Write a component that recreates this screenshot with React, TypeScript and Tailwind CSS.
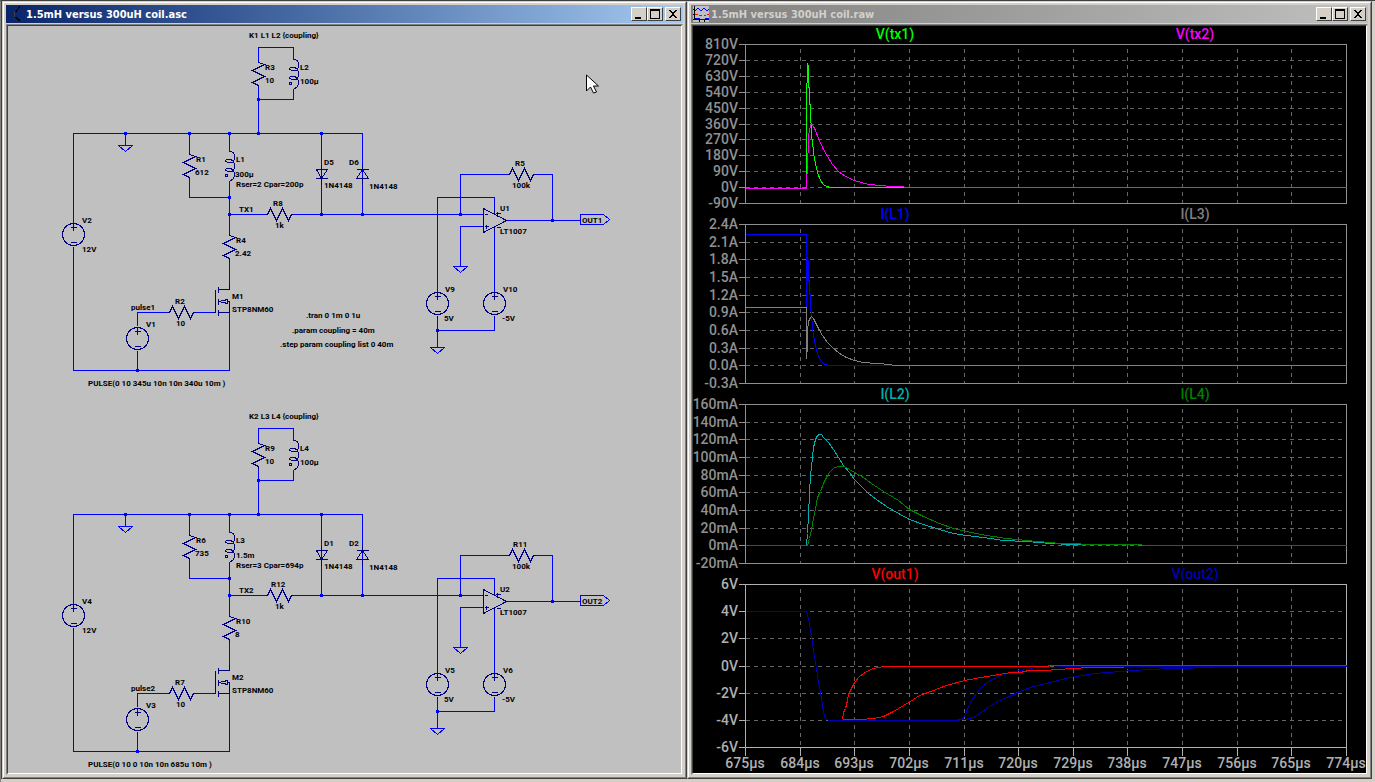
import type { ReactNode } from 'react';
import clsx from 'clsx';

type Point = [number, number];

const toPoints = (pts: Point[]) => pts.map((p) => p.join(',')).join(' ');

/* ---------- window chrome ---------- */

function CaptionButton({ label, children }: { label: string; children: ReactNode }) {
  return (
    <button
      aria-label={label}
      className="h-[14px] w-4 border border-t-white border-l-white border-r-[#404040] border-b-[#404040] bg-[#d4d0c8]"
    >
      <svg viewBox="0 0 14 12" className="block h-3 w-[14px]" shapeRendering="crispEdges">
        {children}
      </svg>
    </button>
  );
}

interface MdiWindowProps {
  title: string;
  active?: boolean;
  icon: ReactNode;
  children: ReactNode;
}

function MdiWindow({ title, active, icon, children }: MdiWindowProps) {
  return (
    <section className="border-t border-l border-r border-b border-t-[#d4d0c8] border-l-[#d4d0c8] border-r-[#404040] border-b-[#404040]">
      <div className="border border-t-white border-l-white border-r-[#808080] border-b-[#808080] bg-[#d4d0c8] p-[2px]">
        <header
          className={clsx(
            'mb-px flex h-[18px] items-center bg-linear-to-r px-[2px]',
            active ? 'from-[#0a246a] to-[#a6caf0] text-white' : 'from-[#808080] to-[#c0c0c0] text-[#d4d0c8]'
          )}
        >
          {icon}
          <h1 className="ml-[2px] flex-1 truncate pt-px font-['DejaVu_Sans_Condensed','DejaVu_Sans',sans-serif] text-[11px] leading-[18px] font-bold">
            {title}
          </h1>
          <div className="flex">
            <CaptionButton label="Minimize">
              <path d="M3 9h6v2H3z" />
            </CaptionButton>
            <CaptionButton label="Maximize">
              <path d="M2 1h10v10H2zM3 3v7h8V3z" fillRule="evenodd" />
            </CaptionButton>
            <span className="w-[2px]" />
            <CaptionButton label="Close">
              <path d="M3 2h2v1h1v1h2V3h1V2h2v1h-1v1H9v1H8v2h1v1h1v1h1v1H9V9H8V8H6v1H5v1H3V9h1V8h1V7h1V5H5V4H4V3H3z" />
            </CaptionButton>
          </div>
        </header>
        <div className="border border-t-[#808080] border-l-[#808080] border-r-[#d4d0c8] border-b-[#d4d0c8]">
          <div className="border border-t-[#404040] border-l-[#404040] border-r-white border-b-white">{children}</div>
        </div>
      </div>
    </section>
  );
}

const SchematicIcon = () => (
  <svg viewBox="0 0 16 16" className="h-4 w-4" fill="none" stroke="#000" shapeRendering="crispEdges">
    <path d="M6.5 5v6" stroke="#404040" />
    <path d="M11.5 0v1l-4 5M7.5 11l4 4M9 13h2v2" />
  </svg>
);

const WaveformIcon = () => (
  <svg viewBox="0 0 16 16" className="h-4 w-4" fill="none" shapeRendering="crispEdges">
    <rect width="16" height="16" fill="#c0c0c0" />
    <path d="M1.5 0v13M0 3.5h2M0 8.5h2M0 13.5h16M6.5 14v2M11.5 14v2" stroke="#000" />
    <path d="M2 5l3-3l3 3l3-3l3 3l2-2M2 12.5h4l2 1h3l2-1h3" stroke="#00f" />
    <path d="M2 8.5h3m1 1h3m2 0h2m1-1h2" stroke="#f00" />
  </svg>
);

/* ---------- schematic ---------- */

const NAVY = '#000080';

function Label({ x, y, children }: { x: number; y: number; children: ReactNode }) {
  return (
    <text x={x} y={y}>
      {children}
    </text>
  );
}

const ResistorV = ({ x, y }: { x: number; y: number }) => (
  <path d={`M${x} ${y - 2}v2l6 2l-12 6l12 6l-12 6l6 3v2`} stroke={NAVY} />
);

const ResistorH = ({ x, y }: { x: number; y: number }) => (
  <path d={`M${x - 2} ${y}h2l3 -6l6 12l6 -12l6 12l3 -6h2`} stroke={NAVY} />
);

const Inductor = ({ x, y }: { x: number; y: number }) => (
  <g transform={`translate(${x} ${y})`} stroke={NAVY}>
    <path d="M0 0C3 0 5 2 5 5C5 10 4 11 1 11C-3 11 -4 10 -4 9C-4 8 -1 8 1 8C4 9 5 11 5 14C5 18 4 20 1 20C-3 20 -4 19 -4 18C-4 17 -1 17 1 17C4 18 5 20 5 23C5 26 3 29 0 29" />
    <path d="M-4 23h2v2h-2z" />
  </g>
);

const Source = ({ x, y }: { x: number; y: number }) => (
  <g transform={`translate(${x} ${y})`} stroke={NAVY}>
    <circle r="11" />
    <path d="M0 -12v8M-3 -7h6M-3 8h6M0 12v2" />
  </g>
);

const Ground = ({ x, y }: { x: number; y: number }) => <path d={`M${x - 7} ${y}h14l-7 6z`} />;

const JUNCTIONS: Point[] = [
  [258, 99], [125, 133], [189, 133], [229, 133], [258, 133], [321, 133], [229, 197], [229, 214],
  [321, 214], [362, 214], [460, 214], [552, 220], [137, 370], [437, 330],
];

interface CircuitProps {
  y?: number;
  labels: [number, number, string][];
}

function Circuit({ y = 0, labels }: CircuitProps) {
  return (
    <g transform={`translate(0 ${y})`}>
      <g transform="translate(.5 .5)" fill="none" stroke="#0000ff" shapeRendering="crispEdges">
        {/* tank loop and supply rail */}
        <path d="M258 60V47H293V59M293 88V99H258M258 87V133M73 222V133H362V214M73 247V370H229V301" />
        <path d="M125 133V145M189 133V152M189 179V197H229M229 133V151M229 180V233M229 260V286" />
        <path d="M321 133V214M229 214H265M293 214H483M137 325V312H167M195 312H212M137 350V370" />
        {/* amplifier */}
        <path d="M460 214V174H507M534 174H552V220M506 220H580M437 291V197H494V209M460 266V226H483" />
        <path d="M494 230V291M494 315V330H437M437 315V347" />
        <path d="M580 214H603L609 219L603 224H580Z" />
        <Ground x={125} y={145} />
        <Ground x={460} y={266} />
        <Ground x={437} y={347} />

        <ResistorV x={258} y={62} />
        <ResistorV x={189} y={154} />
        <ResistorV x={229} y={235} />
        <ResistorH x={267} y={214} />
        <ResistorH x={169} y={312} />
        <ResistorH x={509} y={174} />
        <Inductor x={293} y={59} />
        <Inductor x={229} y={151} />
        <Source x={73} y={234} />
        <Source x={137} y={338} />
        <Source x={437} y={303} />
        <Source x={494} y={303} />

        <g stroke={NAVY}>
          {/* clamp diodes */}
          <path d="M321 164V169M316 169H327L321 178ZM315 178H327M321 178V184" />
          <path d="M362 164V169M356 169H368M362 169L368 178H356ZM362 178V184" />
          {/* mosfet */}
          <path d="M212 312H215V289M218 286V292M218 289H229V283M218 298V304M218 309V315M218 312H229V301H227M218 301L223 300L227 299V303L223 302Z" />
          {/* op amp */}
          <path d="M483 208V232L506 220ZM484 214H487M484 226H488M486 224V228M494 209V214M494 226V230M495 213H500M497 211V216M496 227H500" />
        </g>
      </g>
      <g fill="#0000ff">
        {JUNCTIONS.map(([cx, cy]) => (
          <rect key={`${cx}-${cy}`} x={cx - 1} y={cy - 1} width="3" height="3" />
        ))}
      </g>
      {labels.map(([lx, ly, text]) => (
        <Label key={`${lx}-${ly}`} x={lx} y={ly}>
          {text}
        </Label>
      ))}
    </g>
  );
}

const CIRCUIT_1: [number, number, string][] = [
  [249, 38, 'K1 L1 L2 {coupling}'], [265, 70, 'R3'], [265, 83, '10'], [300, 70, 'L2'], [300, 84, '100µ'],
  [196, 162, 'R1'], [195, 175, '612'], [236, 162, 'L1'], [235, 177, '300µ'], [236, 187, 'Rser=2 Cpar=200p'],
  [324, 165, 'D5'], [349, 165, 'D6'], [324, 188, '1N4148'], [369, 189, '1N4148'],
  [239, 212, 'TX1'], [273, 206, 'R8'], [275, 228, '1k'], [236, 243, 'R4'], [235, 256, '2.42'],
  [82, 223, 'V2'], [82, 252, '12V'], [232, 299, 'M1'], [232, 312, 'STP8NM60'],
  [131, 310, 'pulse1'], [175, 304, 'R2'], [176, 326, '10'], [146, 327, 'V1'],
  [88, 386, 'PULSE(0 10 345u 10n 10n 340u 10m )'],
  [515, 166, 'R5'], [512, 188, '100k'], [500, 211, 'U1'], [500, 234, 'LT1007'], [582, 223, 'OUT1'],
  [445, 292, 'V9'], [444, 321, '5V'], [503, 292, 'V10'], [502, 321, '-5V'],
  [306, 318, '.tran 0 1m 0 1u'], [292, 333, '.param coupling = 40m'], [280, 347, '.step param coupling list 0 40m'],
];

const CIRCUIT_2: [number, number, string][] = [
  [249, 38, 'K2 L3 L4 {coupling}'], [265, 70, 'R9'], [265, 83, '10'], [300, 70, 'L4'], [300, 84, '100µ'],
  [196, 162, 'R6'], [195, 175, '735'], [236, 162, 'L3'], [236, 177, '1.5m'], [236, 187, 'Rser=3 Cpar=694p'],
  [324, 165, 'D1'], [349, 165, 'D2'], [324, 188, '1N4148'], [369, 189, '1N4148'],
  [239, 212, 'TX2'], [271, 206, 'R12'], [275, 228, '1k'], [236, 243, 'R10'], [235, 256, '8'],
  [82, 223, 'V4'], [82, 252, '12V'], [232, 299, 'M2'], [232, 312, 'STP8NM60'],
  [131, 310, 'pulse2'], [175, 304, 'R7'], [176, 326, '10'], [146, 327, 'V3'],
  [88, 386, 'PULSE(0 10 0 10n 10n 685u 10m )'],
  [513, 166, 'R11'], [512, 188, '100k'], [500, 211, 'U2'], [500, 234, 'LT1007'], [582, 223, 'OUT2'],
  [445, 292, 'V5'], [444, 321, '5V'], [503, 292, 'V6'], [502, 321, '-5V'],
];

function Schematic() {
  return (
    <svg
      viewBox="8 26 673 747"
      className="block w-full bg-[#c0c0c0] font-[Roboto,'Liberation_Sans',sans-serif] text-[8px] font-bold"
    >
      <Circuit labels={CIRCUIT_1} />
      <Circuit y={381} labels={CIRCUIT_2} />
      {/* mouse pointer */}
      <path d="M586.5 75v16l4-4l3 6l3-1l-3-6h5z" fill="#fff" stroke="#000" />
    </svg>
  );
}

/* ---------- waveforms ---------- */

const LEFT = 745;
const RIGHT = 1346;
const TIMES = [675, 684, 693, 702, 711, 720, 729, 738, 747, 756, 765, 774];
const timeX = (i: number) => Math.round(LEFT + (i * (RIGHT - LEFT)) / 11);

interface Trace {
  color: string;
  lines: Point[][];
}

interface Pane {
  top: number;
  bottom: number;
  ink: string;
  ticks: string[];
  names: [string, string][];
  traces: Trace[];
}

const PANES: Pane[] = [
  {
    top: 44,
    bottom: 203,
    ink: '#909090',
    ticks: ['810V', '720V', '630V', '540V', '450V', '360V', '270V', '180V', '90V', '0V', '-90V'],
    names: [['V(tx1)', '#00ff00'], ['V(tx2)', '#ff00ff']],
    traces: [
      {
        color: '#00ff00',
        lines: [[
          [745, 188], [806, 188], [806, 83], [807, 82], [807, 63], [808, 66], [808, 86], [809, 88], [809, 103], [810, 105],
          [810, 121], [811, 124], [811, 136], [812, 140], [813, 153], [815, 163], [817, 172], [820, 180], [823, 184],
          [826, 186], [830, 187], [1346, 187],
        ]],
      },
      {
        color: '#ff00ff',
        lines: [[
          [745, 188], [806, 188], [807, 160], [808, 145], [808, 136], [809, 130], [810, 125], [811, 124], [813, 126],
          [815, 130], [818, 138], [822, 147], [827, 156], [832, 164], [838, 171], [845, 176], [854, 180], [868, 184],
          [880, 185], [890, 186], [903, 186], [904, 187], [1346, 187],
        ]],
      },
    ],
  },
  {
    top: 224,
    bottom: 383,
    ink: '#909090',
    ticks: ['2.4A', '2.1A', '1.8A', '1.5A', '1.2A', '0.9A', '0.6A', '0.3A', '0.0A', '-0.3A'],
    names: [['I(L1)', '#0000ff'], ['I(L3)', '#808080']],
    traces: [
      {
        color: '#0000ff',
        lines: [[
          [745, 234], [806, 234], [806, 307], [807, 257], [807, 270], [808, 260], [808, 278], [809, 282], [809, 293],
          [810, 295], [810, 309], [811, 312], [812, 329], [814, 340], [816, 350], [818, 356], [821, 361], [824, 364],
          [828, 365], [891, 365],
        ]],
      },
      {
        color: '#808080',
        lines: [[
          [745, 307], [806, 307], [806, 358], [807, 345], [807, 331], [808, 321], [810, 317], [811, 316], [813, 318],
          [815, 322], [818, 328], [822, 335], [827, 342], [832, 347], [839, 353], [846, 357], [854, 360], [863, 362],
          [876, 363], [891, 364], [892, 365], [1346, 365],
        ]],
      },
    ],
  },
  {
    top: 404,
    bottom: 563,
    ink: '#909090',
    ticks: ['160mA', '140mA', '120mA', '100mA', '80mA', '60mA', '40mA', '20mA', '0mA', '-20mA'],
    names: [['I(L2)', '#00b0b0'], ['I(L4)', '#008000']],
    traces: [
      {
        color: '#00b0b0',
        lines: [[
          [806, 545], [807, 533], [808, 515], [809, 493], [810, 475], [812, 457], [813, 447], [815, 439], [817, 435],
          [819, 434], [821, 434], [823, 437], [828, 442], [833, 449], [838, 457], [843, 465], [849, 472], [854, 479],
          [861, 486], [868, 493], [876, 499], [886, 506], [898, 513], [909, 519], [923, 524], [939, 529], [953, 533],
          [966, 535], [983, 537], [1003, 540], [1026, 541], [1050, 543], [1070, 544], [1094, 544],
        ]],
      },
      {
        color: '#008000',
        lines: [[
          [745, 545], [807, 545], [809, 538], [811, 530], [813, 518], [815, 508], [817, 497], [820, 491], [823, 483],
          [826, 477], [829, 472], [834, 467], [840, 466], [844, 466], [849, 469], [854, 472], [863, 477], [871, 483],
          [883, 491], [898, 500], [909, 509], [923, 516], [939, 523], [953, 528], [966, 531], [986, 535], [1006, 538],
          [1026, 540], [1060, 543], [1100, 544], [1141, 544], [1142, 545], [1346, 545],
        ]],
      },
    ],
  },
  {
    top: 584,
    bottom: 747,
    ink: '#b0b0b0',
    ticks: ['6V', '4V', '2V', '0V', '-2V', '-4V', '-6V'],
    names: [['V(out1)', '#ff0000'], ['V(out2)', '#0000b0']],
    traces: [
      {
        color: '#0000b0',
        lines: [
          [
            [745, 611], [806, 611], [808, 618], [811, 635], [813, 650], [816, 668], [818, 682], [821, 698], [823, 712],
            [825, 718], [828, 720], [955, 720], [963, 718], [966, 711], [971, 700], [976, 693], [981, 687], [988, 681],
            [998, 676], [1009, 672], [1019, 670], [1026, 669], [1035, 667], [1053, 667], [1060, 666], [1346, 666],
          ],
          [
            [955, 720], [965, 719], [973, 717], [979, 713], [989, 706], [999, 700], [1009, 696], [1019, 691], [1033, 686],
            [1050, 682], [1069, 677], [1095, 673], [1107, 672], [1133, 670], [1148, 669], [1173, 668], [1215, 667],
          ],
        ],
      },
      {
        color: '#ff0000',
        lines: [
          [
            [842, 719], [843, 712], [845, 708], [847, 700], [848, 694], [850, 690], [854, 682], [859, 676], [866, 671],
            [873, 668], [883, 666], [1048, 666], [1048, 665], [1346, 665],
          ],
          [
            [842, 719], [861, 719], [873, 718], [883, 716], [893, 711], [903, 705], [913, 699], [919, 695], [933, 690],
            [946, 685], [964, 680], [986, 676], [999, 674], [1011, 672], [1020, 672], [1028, 670], [1044, 670],
            [1057, 669], [1088, 667], [1123, 667],
          ],
        ],
      },
    ],
  },
];

function PlotPane({ top, bottom, ink, ticks, names, traces }: Pane) {
  const tickY = (i: number) => Math.round(top + (i * (bottom - top)) / (ticks.length - 1));

  return (
    <g>
      <g transform="translate(.5 .5)" fill="none" shapeRendering="crispEdges">
        <g stroke="#666" strokeDasharray="4 4">
          {ticks.slice(1, -1).map((t, i) => (
            <path key={t} d={`M${LEFT} ${tickY(i + 1)}H${RIGHT}`} />
          ))}
          {TIMES.slice(1, -1).map((t, i) => (
            <path key={t} d={`M${timeX(i + 1)} ${top}V${bottom}`} strokeDashoffset="4" />
          ))}
        </g>
        <g stroke={ink}>
          <path d={`M${LEFT} ${top}H${RIGHT}V${bottom}H${LEFT}Z`} />
          {ticks.map((t, i) => (
            <path key={t} d={`M${LEFT - 7} ${tickY(i)}h7`} />
          ))}
        </g>
        {traces.map(({ color, lines }) =>
          lines.map((line, i) => <polyline key={color + i} points={toPoints(line)} stroke={color} />)
        )}
      </g>
      {ticks.map((t, i) => (
        <text key={t} x={LEFT - 7} y={tickY(i) + 5} fill={ink} textAnchor="end">
          {t}
        </text>
      ))}
      {names.map(([name, color], i) => (
        <text key={name} x={LEFT + 150 + i * 300} y={top - 5} fill={color} textAnchor="middle">
          {name}
        </text>
      ))}
    </g>
  );
}

function Waveforms() {
  return (
    <svg
      viewBox="693 26 673 747"
      className="block w-full bg-black font-[Roboto,'Liberation_Sans',sans-serif] text-[14px] font-medium"
    >
      {PANES.map((pane) => (
        <PlotPane key={pane.top} {...pane} />
      ))}
      {TIMES.map((t, i) => (
        <g key={t}>
          <path d={`M${timeX(i)} 747v8`} transform="translate(.5 .5)" stroke="#b0b0b0" shapeRendering="crispEdges" />
          <text x={timeX(i)} y="768" fill="#b0b0b0" textAnchor="middle">
            {t}µs
          </text>
        </g>
      ))}
    </svg>
  );
}

export default function App() {
  return (
    <main className="min-h-screen border-t border-t-[#404040] border-l border-l-[#808080] bg-[#d4d0c8]">
      <div className="grid grid-cols-2 border-l border-l-[#404040] pr-[3px]">
        <MdiWindow title="1.5mH versus 300uH coil.asc" active icon={<SchematicIcon />}>
          <Schematic />
        </MdiWindow>
        <MdiWindow title="1.5mH versus 300uH coil.raw" icon={<WaveformIcon />}>
          <Waveforms />
        </MdiWindow>
      </div>
    </main>
  );
}
